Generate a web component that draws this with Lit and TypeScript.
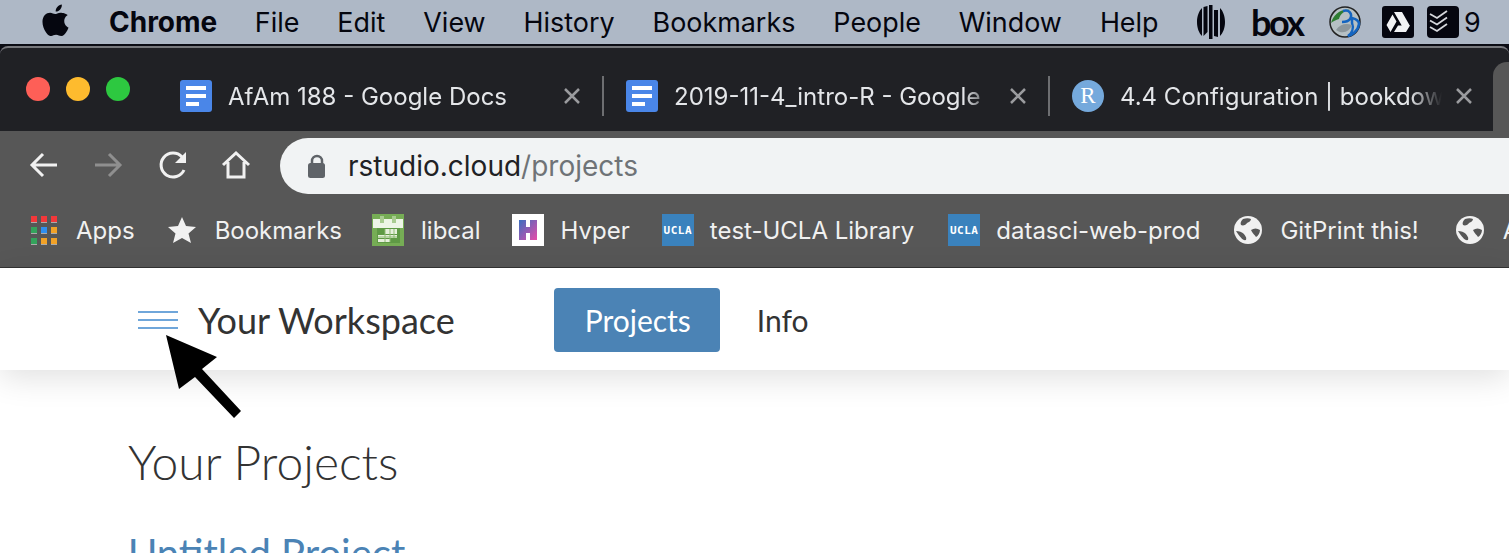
import { LitElement, html, css } from 'lit'
import { customElement } from 'lit/decorators.js'

const MENUS = ['File', 'Edit', 'View', 'History', 'Bookmarks', 'People', 'Window', 'Help']

const docIcon = html`<svg class="fav" viewBox="0 0 32 32">
  <rect width="32" height="32" rx="3" fill="#4a86e8"></rect>
  <path d="M6 6h20v4H6zM6 14h20v4H6zM6 22h13v4H6z" fill="#fff"></path>
</svg>`

const rIcon = html`<span class="r-icon">R</span>`

const uclaIcon = html`<span class="ucla">UCLA</span>`

const globe = html`<svg class="fav globe" viewBox="0 0 28 28">
  <circle cx="14" cy="14" r="14" fill="#f1f1f1"></circle>
  <path d="M9 3c3-1 6-1 8 0 0 2-2 3-4 4-1 2-4 3-6 2-1-2 0-4 2-6zM2 15c3 0 6 1 8 3 1 2 3 3 2 6-3 1-6-3-10-9zM17 14c3-2 6-2 9 0 0 3-2 6-4 7-1-2-4-4-5-7z" fill="#575757"></path>
</svg>`

const TABS = [
  { icon: docIcon, title: 'AfAm 188 - Google Docs' },
  { icon: docIcon, title: '2019-11-4_intro-R - Google' },
  { icon: rIcon, title: '4.4 Configuration | bookdow' },
]

const appsColors = ['#f2383a', '#f2383a', '#f2383a', '#34a35c', '#2f8ff0', '#f2a227', '#34a35c', '#f2a227', '#f2a227']

@customElement('app-root')
export class AppRoot extends LitElement {
  static styles = css`
    :host {
      display: block;
      width: 1509px;
      height: 553px;
      overflow: hidden;
      position: relative;
      background: #fff;
      font-family: Inter, 'Liberation Sans', sans-serif;
    }

    .menubar {
      height: 44px;
      background: #aeb8c6;
      display: flex;
      align-items: center;
      padding-left: 42px;
      color: #05060f;
      font-size: 26.900px;
      border-bottom: 2px solid #0b0c14;
    }
    .apple { width: 27px; height: 32px; margin-right: 40px; margin-top: -4px; }
    .menubar .brand { font-weight: 700; font-size: 28px; margin-right: 37.500px; }
    .menus { display: flex; gap: 38px; }
    .tray { display: flex; align-items: center; position: absolute; left: 1197px; top: 5px; height: 34px; }
    .tray svg { display: block; flex: none; }
    .box-logo {
      font-family: Lato, sans-serif;
      font-weight: 700;
      font-size: 36px;
      letter-spacing: -2.500px;
      line-height: 34px;
      margin: 0 26px 0 26px;
      width: 52px;
      flex: none;
      color: #05060f;
    }
    .tray .drive { margin-left: 21px; }
    .tray .todo { margin-left: 13px; }
    .tray .nine { margin-left: 5px; }

    .window {
      background: #202125;
      border-top: 2px solid #77787c;
      border-radius: 8px 8px 0 0;
      overflow: hidden;
    }
    .menubar-gap { background: #0b0c14; }

    .tabstrip {
      height: 83px;
      display: flex;
      padding-left: 26px;
      position: relative;
    }
    .lights { display: flex; gap: 16px; margin-top: 29px; margin-right: 50px; }
    .lights span { width: 24px; height: 24px; border-radius: 50%; }
    .lights .red { background: #fe5f57; }
    .lights .yellow { background: #febb2e; }
    .lights .green { background: #2dc840; }
    .tab {
      width: 446px;
      height: 32px;
      margin-top: 32px;
      display: flex;
      align-items: center;
      flex: none;
      color: #e4e6e9;
      font-size: 24px;
    }
    .tab .title {
      margin-left: 16px;
      width: 330px;
      white-space: nowrap;
      overflow: hidden;
      flex: none;
      -webkit-mask-image: linear-gradient(to right, #000 290px, transparent 322px);
      mask-image: linear-gradient(to right, #000 290px, transparent 322px);
    }
    .tab .close { width: 18px; height: 18px; margin-left: 5px; flex: none; }
    .tab .sep { width: 2px; height: 40px; background: #6d6e71; margin-left: 21px; flex: none; }
    .fav { width: 32px; height: 32px; flex: none; display: block; }
    .globe { width: 28px; height: 28px; }
    .r-icon {
      width: 32px;
      height: 32px;
      border-radius: 50%;
      background: #75a9dc;
      color: #fff;
      font-family: 'Liberation Serif', serif;
      font-size: 23px;
      display: flex;
      align-items: center;
      justify-content: center;
      flex: none;
    }
    .corner {
      position: absolute;
      left: 1493px;
      top: 14px;
      width: 40px;
      height: 70px;
      background: #575757;
      border-radius: 14px 0 0 0;
    }

    .toolbar {
      height: 67px;
      background: #575757;
      display: flex;
      align-items: center;
      padding-left: 28px;
    }
    .nav { width: 32px; height: 32px; margin-right: 32px; flex: none; }
    .nav.last { margin-right: 28px; }
    .omnibox {
      flex: 1;
      height: 56px;
      margin-top: 3px;
      background: #f1f3f4;
      border-radius: 28px 0 0 28px;
      display: flex;
      align-items: center;
      padding-left: 28px;
      font-size: 28px;
      color: #202124;
      margin-right: -2px;
    }
    .lock { width: 18px; height: 24px; margin-right: 22px; }
    .omnibox .path { color: #6f7377; }

    .bookmarks {
      height: 70px;
      background: #575757;
      border-bottom: 1px solid #333;
      box-sizing: border-box;
      display: flex;
      align-items: center;
      padding-left: 31px;
      padding-bottom: 5px;
      color: #f1f1f1;
      font-size: 24px;
      white-space: nowrap;
    }
    .bm { display: flex; align-items: center; gap: 17px; margin-right: 32px; flex: none; }
    .bm:nth-child(1) { gap: 19px; margin-right: 33px; }
    .bm:nth-child(2) { gap: 19px; margin-right: 30px; }
    .bm:nth-child(3) { margin-right: 31px; }
    .bm:nth-child(5) { gap: 16px; margin-right: 34px; }
    .bm:nth-child(6) { gap: 16px; margin-right: 34px; }
    .bm:nth-child(7) { gap: 18px; margin-right: 37px; }
    .bm:nth-child(8) { gap: 19px; }
    .apps { display: grid; grid-template-columns: repeat(3, 6px); gap: 4px; width: 26px; }
    .apps span { height: 7px; border-bottom: 1px solid #aaa; box-sizing: border-box; }
    .star { width: 28px; height: 28px; }
    .ucla {
      width: 32px;
      height: 32px;
      background: #3a82bd;
      color: #fff;
      font-family: 'DejaVu Sans Mono', monospace;
      font-weight: 700;
      font-size: 11px;
      letter-spacing: 0.500px;
      display: flex;
      align-items: center;
      justify-content: center;
      flex: none;
    }
    .hv {
      width: 32px;
      height: 32px;
      background: #fff;
      flex: none;
    }

    .site-head {
      height: 102px;
      box-sizing: border-box;
      padding-top: 2px;
      background: #fff;
      display: flex;
      align-items: center;
      padding-left: 138px;
      font-family: Lato, sans-serif;
      color: #333;
      box-shadow: 0 8px 30px rgba(0, 0, 0, 0.12);
      position: relative;
    }
    .burger { width: 40px; display: flex; flex-direction: column; gap: 6px; margin-right: 20px; }
    .burger span { height: 2px; background: #6fa6da; }
    .workspace { font-size: 36px; margin-right: 99px; }
    .site-nav { display: flex; align-items: center; font-size: 30px; }
    .site-nav a { height: 64px; line-height: 64px; border-radius: 4px; }
    .site-nav a.active { padding: 0 29px 0 31px; margin-right: 37px; background: #4b83b5; color: #fff; }

    .content { padding: 58px 0 0 128px; font-family: Lato, sans-serif; }
    h1 {
      margin: 0;
      font-weight: 300;
      font-size: 48px;
      line-height: 68px;
      color: #333;
    }
    .project {
      font-size: 40px;
      color: #4b83b5;
      margin-top: 35px;
      line-height: 44px;
    }

    .pointer { position: absolute; left: 160px; top: 330px; width: 90px; height: 95px; }
  `

  private tray() {
    return html`<div class="tray">
      <svg width="28" height="34" viewBox="0 0 28 34">
        <path d="M0 17C0 11 2 6 5 3v28C2 28 0 23 0 17zM6.500 2l4-1v26l-4 4zM12 0h3.500v34H12zM17 5h4v27l-4-1zM23 3c3 3 5 8 5 14s-2 11-5 14z" fill="#05060f"></path>
      </svg>
      <span class="box-logo">box</span>
      <svg width="32" height="32" viewBox="0 0 32 32">
        <circle cx="16" cy="16" r="15" fill="#b6c0c4" stroke="#222" stroke-width="1.500"></circle>
        <path d="M2 17C4 9 12 2 21 4c-5 0-10 4-11 9-3 1-6 2-8 4z" fill="#2e7d32"></path>
        <path d="M14 5c6-2 10 3 7 8-2 3-6 3-8 3M23 12c4 1 7 3 7 6-1 7-7 11-11 12 4-3 6-8 4-13z" fill="none" stroke="#1565c0" stroke-width="2.500"></path>
        <path d="M7 24c4-6 10-7 16-5-2 6-9 10-16 5z" fill="#8d979c"></path>
      </svg>
      <svg class="drive" width="32" height="32" viewBox="0 0 32 32">
        <rect width="32" height="32" rx="3" fill="#05060f"></rect>
        <path d="M12 6h8l8 14h-8zM10.500 8.500l4 7-6 10.500-4-7zM12 26l4-6.500h12l-4 6.500z" fill="#f2f3f5"></path>
      </svg>
      <svg class="todo" width="32" height="32" viewBox="0 0 32 32">
        <rect width="32" height="32" rx="4" fill="#05060f"></rect>
        <path d="M3 8l7 4 10-7M3 14.500l7 4 10-7M3 21l7 4 10-7" fill="none" stroke="#d5d7dc" stroke-width="1.800"></path>
      </svg>
      <span class="nine">9</span>
    </div>`
  }

  private tab(t: (typeof TABS)[number], i: number) {
    return html`<div class="tab">
      ${t.icon}
      <span class="title">${t.title}</span>
      <svg class="close" viewBox="0 0 18 18"><path d="M2 2l14 14M16 2L2 16" stroke="#9a9b9e" stroke-width="2.500"></path></svg>
      ${i < 2 ? html`<span class="sep"></span>` : ''}
    </div>`
  }

  render() {
    return html`
      <div class="menubar">
        <svg class="apple" viewBox="0 0 814 1000">
          <path d="M788 341c-6 4-108 62-108 190 0 149 130 201 134 203-1 3-21 72-69 142-43 62-88 124-156 124s-86-40-165-40c-77 0-104 41-166 41s-106-57-156-127C44 792 0 671 0 556 0 371 120 273 238 273c63 0 115 41 155 41 38 0 97-44 168-44 27 0 124 3 227 71zM555 168c29-35 50-83 50-131 0-7-1-13-2-19-48 2-105 32-139 72-27 31-52 79-52 128 0 7 1 15 2 17 3 1 8 1 13 1 43 0 97-29 128-68z" fill="#05060f"></path>
        </svg>
        <span class="brand">Chrome</span>
        <div class="menus">${MENUS.map((m) => html`<span>${m}</span>`)}</div>
        ${this.tray()}
      </div>

      <div class="menubar-gap">
        <div class="window">
          <div class="tabstrip">
            <div class="lights">
              <span class="red"></span>
              <span class="yellow"></span>
              <span class="green"></span>
            </div>
            ${TABS.map((t, i) => this.tab(t, i))}
            <div class="corner"></div>
          </div>

          <div class="toolbar">
            <svg class="nav" viewBox="0 0 32 32"><path d="M29 16H5M15 5L4 16l11 11" fill="none" stroke="#f1f1f1" stroke-width="3"></path></svg>
            <svg class="nav" viewBox="0 0 32 32"><path d="M3 16h24M17 5l11 11-11 11" fill="none" stroke="#8f8f8f" stroke-width="3"></path></svg>
            <svg class="nav" viewBox="-2 0 32 32"><path d="M26 21a12 12 0 1 1-2-13" fill="none" stroke="#f1f1f1" stroke-width="3"></path><path d="M28 3v11H17z" fill="#f1f1f1"></path></svg>
            <svg class="nav last" viewBox="0 0 32 32"><path d="M3 16L16 4l13 12M8 13v15h16V13" fill="none" stroke="#f1f1f1" stroke-width="3"></path></svg>
            <div class="omnibox">
              <svg class="lock" viewBox="0 0 18 24"><path d="M4 11V7a5 5 0 0 1 10 0v4" fill="none" stroke="#5f6368" stroke-width="2.500"></path><rect y="9" width="17" height="15" rx="2.500" fill="#5f6368"></rect></svg>
              <span>rstudio.cloud<span class="path">/projects</span></span>
            </div>
          </div>

          <div class="bookmarks">
            <div class="bm">
              <span class="apps">${appsColors.map((c) => html`<span style="background:${c}"></span>`)}</span>
              <span>Apps</span>
            </div>
            <div class="bm">
              <svg class="star" viewBox="0 0 28 28"><path d="M14 1l4 9 10 1-7.500 6.500L23 27l-9-5-9 5 2.500-9.500L0 11l10-1z" fill="#f1f1f1"></path></svg>
              <span>Bookmarks</span>
            </div>
            <div class="bm">
              <svg class="fav" viewBox="0 0 32 32">
                <rect width="32" height="32" fill="#76ad55"></rect>
                <rect x="1" y="5" width="30" height="9" fill="#edf5e6"></rect>
                <path d="M8 2h4v7H8zM20 2h4v7h-4z" fill="#a9cc91"></path>
                <rect x="5" y="14" width="23" height="15" fill="#5f9a45"></rect>
                <path d="M13 15h12v5H13zM6 21h19v3H6zM6 25h12v3H6z" fill="#e6f0dc"></path>
                <path d="M13 15v13M18 15v13M22 15v9M6 23h19" stroke="#8fbb74"></path>
              </svg>
              <span>libcal</span>
            </div>
            <div class="bm">
              <svg class="hv" viewBox="0 0 32 32">
                <defs><linearGradient id="hv" x1="0" y1="0" x2="1" y2="1"><stop offset="0" stop-color="#3a6fc0"></stop><stop offset="1" stop-color="#e84aa8"></stop></linearGradient></defs>
                <rect width="32" height="32" fill="#fff"></rect>
                <path d="M7 6h7v7h4V6h7v20h-7v-7h-4v7H7z" fill="url(#hv)"></path>
              </svg>
              <span>Hvper</span>
            </div>
            <div class="bm">${uclaIcon}<span>test-UCLA Library</span></div>
            <div class="bm">${uclaIcon}<span>datasci-web-prod</span></div>
            <div class="bm">${globe}<span>GitPrint this!</span></div>
            <div class="bm">${globe}<span>A</span></div>
          </div>
        </div>
      </div>

      <div class="site-head">
        <div class="burger"><span></span><span></span><span></span></div>
        <span class="workspace">Your Workspace</span>
        <nav class="site-nav">
          <a class="active">Projects</a>
          <a>Info</a>
        </nav>
      </div>

      <div class="content">
        <h1>Your Projects</h1>
        <div class="project">Untitled Project</div>
      </div>

      <svg class="pointer" viewBox="160 330 90 95">
        <path d="M166 335L217 357L202 369L241 411L234 418L195 377L179 389Z" fill="#000"></path>
      </svg>
    `
  }
}
